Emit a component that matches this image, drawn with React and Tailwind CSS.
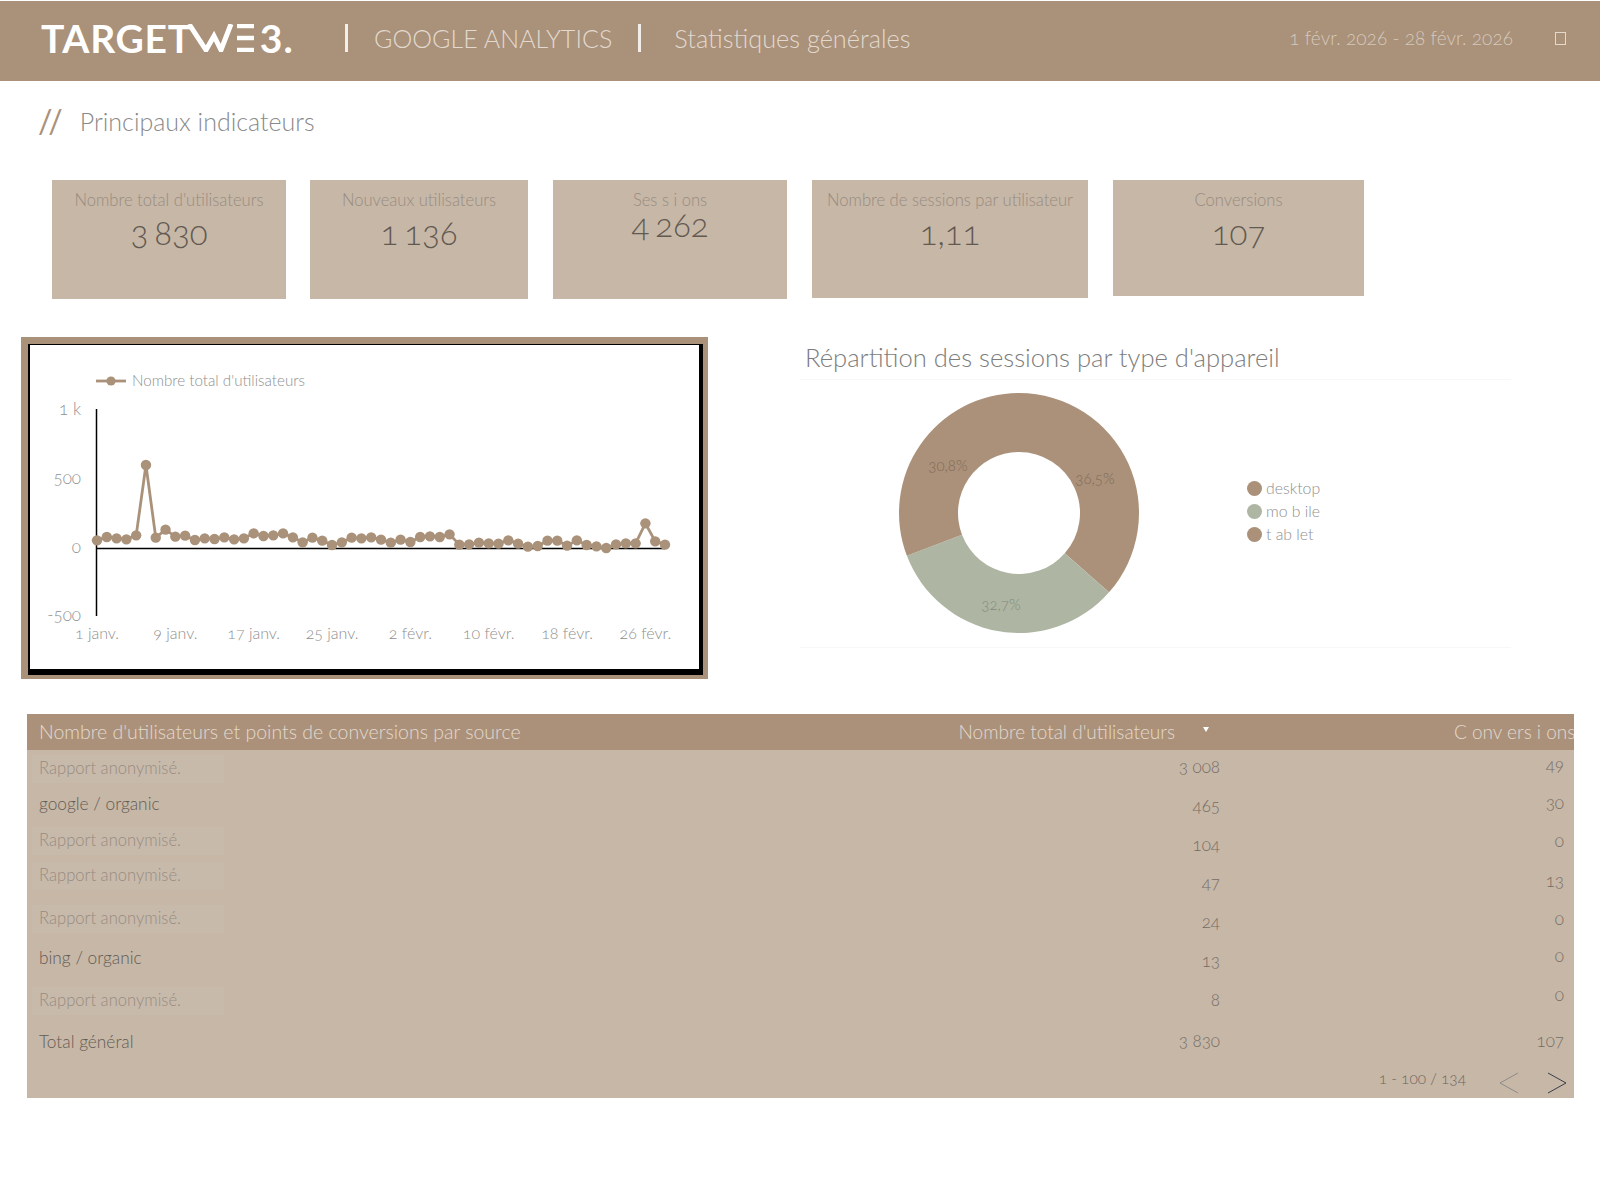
import React from "react";

const ys = [658,648,652,655,643,432,650,626,647,644,657,652,654,649,655,652,637,645,643,637,649,664,650,659,672,664,650,652,649,656,665,656,663,648,646,648,640,671,670,665,667,668,658,668,677,675,659,659,674,658,672,676,681,670,667,667,607,661,671];
// plot coordinates are local to the frame's inner area
const pts = ys.map((y, i) => [97 + i * 9.793 - 30, 320 + y / 3 - 344]);
const xLabels = [["1 janv.", 0], ["9 janv.", 8], ["17 janv.", 16], ["25 janv.", 24], ["2 févr.", 32], ["10 févr.", 40], ["18 févr.", 48], ["26 févr.", 56]];
const yLabels = [["1 k", 70], ["500", 139], ["0", 208], ["-500", 276]];

function polar(cx, cy, r, deg) {
  const a = ((deg - 90) * Math.PI) / 180;
  return [cx + r * Math.cos(a), cy + r * Math.sin(a)];
}
function slice(cx, cy, R, r, a0, a1) {
  const [x0, y0] = polar(cx, cy, R, a0);
  const [x1, y1] = polar(cx, cy, R, a1);
  const [x2, y2] = polar(cx, cy, r, a1);
  const [x3, y3] = polar(cx, cy, r, a0);
  const large = a1 - a0 > 180 ? 1 : 0;
  return `M${x0} ${y0}A${R} ${R} 0 ${large} 1 ${x1} ${y1}L${x2} ${y2}A${r} ${r} 0 ${large} 0 ${x3} ${y3}Z`;
}

function Kpi({ w, h, gap = "", label, value, valueClass = "mt-[10px]" }) {
  return (
    <div className={`bg-[#c7b7a7] flex flex-col items-center shrink-0 pt-[10px] ${w} ${h} ${gap}`}>
      <div className="text-[16.6px] leading-5 font-light text-[#978c80]">{label}</div>
      <div className={`text-[33px] leading-6 font-light text-[#625950] oldstyle-nums [word-spacing:-3px] ${valueClass}`}>{value}</div>
    </div>
  );
}

function Anon({ mt = "" }) {
  return (
    <div className={`h-7 w-[192px] ml-[5px] pl-[7px] pb-[2px] flex items-center bg-[#c8baab] text-[16.6px] text-[#978c80] ${mt}`}>Rapport anonymisé.</div>
  );
}
function Src({ mt = "", children }) {
  return <div className={`h-7 pl-3 flex items-center text-[17.3px] text-[#625c55] ${mt}`}>{children}</div>;
}
function Num({ mt = "", children }) {
  return <div className={`h-7 flex items-center justify-end ${mt}`}>{children}</div>;
}

export default function App() {
  return (
    <div className="w-[1600px] h-[1200px] bg-white font-['Lato',sans-serif] font-light overflow-hidden pt-px">
      {/* Header */}
      <header className="h-20 bg-[#a9917a] flex items-center pb-[6px] text-[#e3d9cf]">
        <div className="ml-[41px] w-[256px] flex items-center text-white font-bold text-[39px] leading-none tracking-[0.7px]">
          <span>TARGET</span>
          <svg width="68" height="28" viewBox="0 0 68 28" className="shrink-0 -ml-[5px]" fill="none" stroke="#fff">
            <path d="M2 0 L19 26 L27 12 L34 26 L44 0" strokeWidth="5" />
            <path d="M50 2 H67 M50 14 H67 M50 26 H67" strokeWidth="4.5" />
          </svg>
          <span className="ml-[5px] tracking-[1px]">3.</span>
        </div>
        <div className="w-[3px] h-7 bg-[#f3eee9] ml-[48px]" />
        <div className="ml-[26px] text-[25px] leading-8 font-light tracking-[0.05px]">GOOGLE ANALYTICS</div>
        <div className="w-[3px] h-7 bg-[#f3eee9] ml-[26px]" />
        <div className="ml-[33px] text-[25.3px] leading-8 font-light">Statistiques générales</div>
        <div className="ml-auto text-[19px] leading-6 font-light oldstyle-nums tracking-[0.05px] text-[#d6c9bc]">1 févr. 2026 - 28 févr. 2026</div>
        <div className="w-[11px] h-[13px] border border-[#e3d9cf] ml-[42px] mr-[34px]" />
      </header>

      {/* Section title */}
      <div className="flex items-center h-[34px] mt-[23px] ml-[38px]">
        <span className="text-[#a9917a] text-[32px] leading-none font-normal tracking-[3px]">//</span>
        <span className="ml-[14px] text-[25px] leading-8 text-[#8a8a8a]">Principaux indicateurs</span>
      </div>

      {/* KPI row */}
      <div className="flex items-start mt-[42px] ml-[52px]">
        <Kpi w="w-[234px]" h="h-[119px]" label="Nombre total d'utilisateurs" value="3 830" />
        <Kpi w="w-[218px]" h="h-[119px]" gap="ml-6" label="Nouveaux utilisateurs" value="1 136" />
        <Kpi w="w-[234px]" h="h-[119px]" gap="ml-[25px]" label="Ses s i ons" value="4 262" valueClass="mt-[2px]" />
        <Kpi w="w-[276px]" h="h-[118px]" gap="ml-[25px]" label="Nombre de sessions par utilisateur" value="1,11" />
        <Kpi w="w-[251px]" h="h-[116px]" gap="ml-[25px]" label="Conversions" value="107" />
      </div>

      {/* Chart + donut row */}
      <div className="flex items-start mt-[38px] ml-[21px]">
        <div className="w-[687px] h-[342px] bg-[#a9917a] pt-[7px] pl-[7px] pr-[5px] pb-1 shrink-0">
          <div className="w-[675px] h-[331px] bg-white border-l-2 border-t border-r-4 border-b-[6px] border-black relative">
            <svg width="670" height="324" viewBox="0 0 670 324" className="block font-['Lato',sans-serif]">
              <line x1="66" y1="36" x2="96" y2="36" stroke="#a9917a" strokeWidth="2.8" />
              <circle cx="81" cy="36" r="4.6" fill="#a9917a" />
              <text x="102" y="41" fontSize="15.2" fontWeight="300" fill="#8f8f8f">Nombre total d'utilisateurs</text>
              {yLabels.map(([t, y]) => (
                <text key={t} x="51" y={y} textAnchor="end" fontSize="17" fontWeight="300" fill="#8f8f8f" className="oldstyle-nums">{t}</text>
              ))}
              {xLabels.map(([t, i]) => (
                <text key={t} x={67 + i * 9.793} y="294" textAnchor="middle" fontSize="16" fontWeight="300" fill="#8f8f8f" className="oldstyle-nums">{t}</text>
              ))}
              <line x1="66.5" y1="64" x2="66.5" y2="271" stroke="#000" strokeWidth="1.5" />
              <line x1="66" y1="203.5" x2="635" y2="203.5" stroke="#000" strokeWidth="1.5" />
              <polyline points={pts.map((p) => `${p[0]},${p[1]}`).join(" ")} fill="none" stroke="#a9917a" strokeWidth="2.8" />
              {pts.map((p, i) => (
                <circle key={i} cx={p[0]} cy={p[1]} r="5.2" fill="#a9917a" />
              ))}
            </svg>
          </div>
        </div>

        <div className="ml-[92px] w-[711px] shrink-0">
          <div className="h-[42px] flex items-center pl-[5px] pb-[2px] text-[25.6px] text-[#7d7d7d] font-light">Répartition des sessions par type d'appareil</div>
          <div className="h-[269px] border-y border-[#f8f8f8] relative">
            <svg width="260" height="260" viewBox="0 0 260 260" className="absolute left-[89px] top-[3px] font-['Lato',sans-serif]">
              <path d={slice(130, 130, 120, 61, 0, 131.4)} fill="#ab9179" />
              <path d={slice(130, 130, 120, 61, 131.4, 249.1)} fill="#aeb6a3" />
              <path d={slice(130, 130, 120, 61, 249.1, 360)} fill="#ab9179" />
              <text x="206" y="101" textAnchor="middle" fontSize="15" fill="#7e6b59" className="oldstyle-nums">36,5%</text>
              <text x="112" y="227" textAnchor="middle" fontSize="15" fill="#848b7a" className="oldstyle-nums">32,7%</text>
              <text x="59" y="88" textAnchor="middle" fontSize="15" fill="#7e6b59" className="oldstyle-nums">30,8%</text>
            </svg>
            <div className="absolute left-[447px] top-[100px] flex flex-col gap-[7px] text-[15.8px] leading-4 text-[#8f8f8f]">
              <div className="flex items-center gap-[4px]"><span className="w-[15px] h-[15px] rounded-full bg-[#ab9179]" />desktop</div>
              <div className="flex items-center gap-[4px]"><span className="w-[15px] h-[15px] rounded-full bg-[#aeb6a3]" />mo b ile</div>
              <div className="flex items-center gap-[4px]"><span className="w-[15px] h-[15px] rounded-full bg-[#ab9179]" />t ab let</div>
            </div>
          </div>
        </div>
      </div>

      {/* Table */}
      <div className="w-[1547px] h-[384px] ml-[27px] mt-[35px] bg-[#c7b7a7] overflow-hidden relative text-[17px]">
        <div className="h-9 bg-[#ab9179] flex items-center text-[#e3d9cf] text-[19.5px] relative whitespace-nowrap">
          <span className="ml-3">Nombre d'utilisateurs et points de conversions par source</span>
          <span className="absolute right-[399px] text-[19px]">Nombre total d'utilisateurs</span>
          <span className="absolute left-[1176px] top-[13px] w-0 h-0 border-x-[3px] border-x-transparent border-t-[5px] border-t-white" />
          <span className="absolute left-[1427px] text-[19px]">C onv ers i ons</span>
        </div>
        <div className="flex">
          <div className="w-[600px] flex flex-col pt-[5px]">
            <Anon />
            <Src mt="mt-[7px]">google / organic</Src>
            <Anon mt="mt-[9px]" />
            <Anon mt="mt-[7px]" />
            <Anon mt="mt-[15px]" />
            <Src mt="mt-[11px]">bing / organic</Src>
            <Anon mt="mt-[15px]" />
            <Src mt="mt-[13px]">Total général</Src>
          </div>
          <div className="w-[593px] flex flex-col pt-[3px] text-[#746c64] oldstyle-nums">
            <Num>3 008</Num>
            <Num mt="mt-[11px]">465</Num>
            <Num mt="mt-[11px]">104</Num>
            <Num mt="mt-[10px]">47</Num>
            <Num mt="mt-[11px]">24</Num>
            <Num mt="mt-[11px]">13</Num>
            <Num mt="mt-[11px]">8</Num>
            <Num mt="mt-[13px]">3 830</Num>
          </div>
          <div className="w-[344px] flex flex-col pt-px text-[#746c64] oldstyle-nums">
            <Num>49</Num>
            <Num mt="mt-[10px]">30</Num>
            <Num mt="mt-[10px]">0</Num>
            <Num mt="mt-[12px]">13</Num>
            <Num mt="mt-[10px]">0</Num>
            <Num mt="mt-[9px]">0</Num>
            <Num mt="mt-[11px]">0</Num>
            <Num mt="mt-[18px]">107</Num>
          </div>
        </div>
        <div className="absolute right-[7px] bottom-[4px] flex items-start text-[15.4px] leading-[12px] text-[#6e665e] oldstyle-nums">
          <span>1 - 100 / 134</span>
          <svg width="20" height="22" viewBox="0 0 20 22" className="ml-[33px]" fill="none" stroke="#8d8c8a" strokeWidth="1"><path d="M19 1 L1 11 L19 21" /></svg>
          <svg width="20" height="22" viewBox="0 0 20 22" className="ml-[28px]" fill="none" stroke="#3a3d4a" strokeWidth="1"><path d="M1 1 L19 11 L1 21" /></svg>
        </div>
      </div>
    </div>
  );
}
